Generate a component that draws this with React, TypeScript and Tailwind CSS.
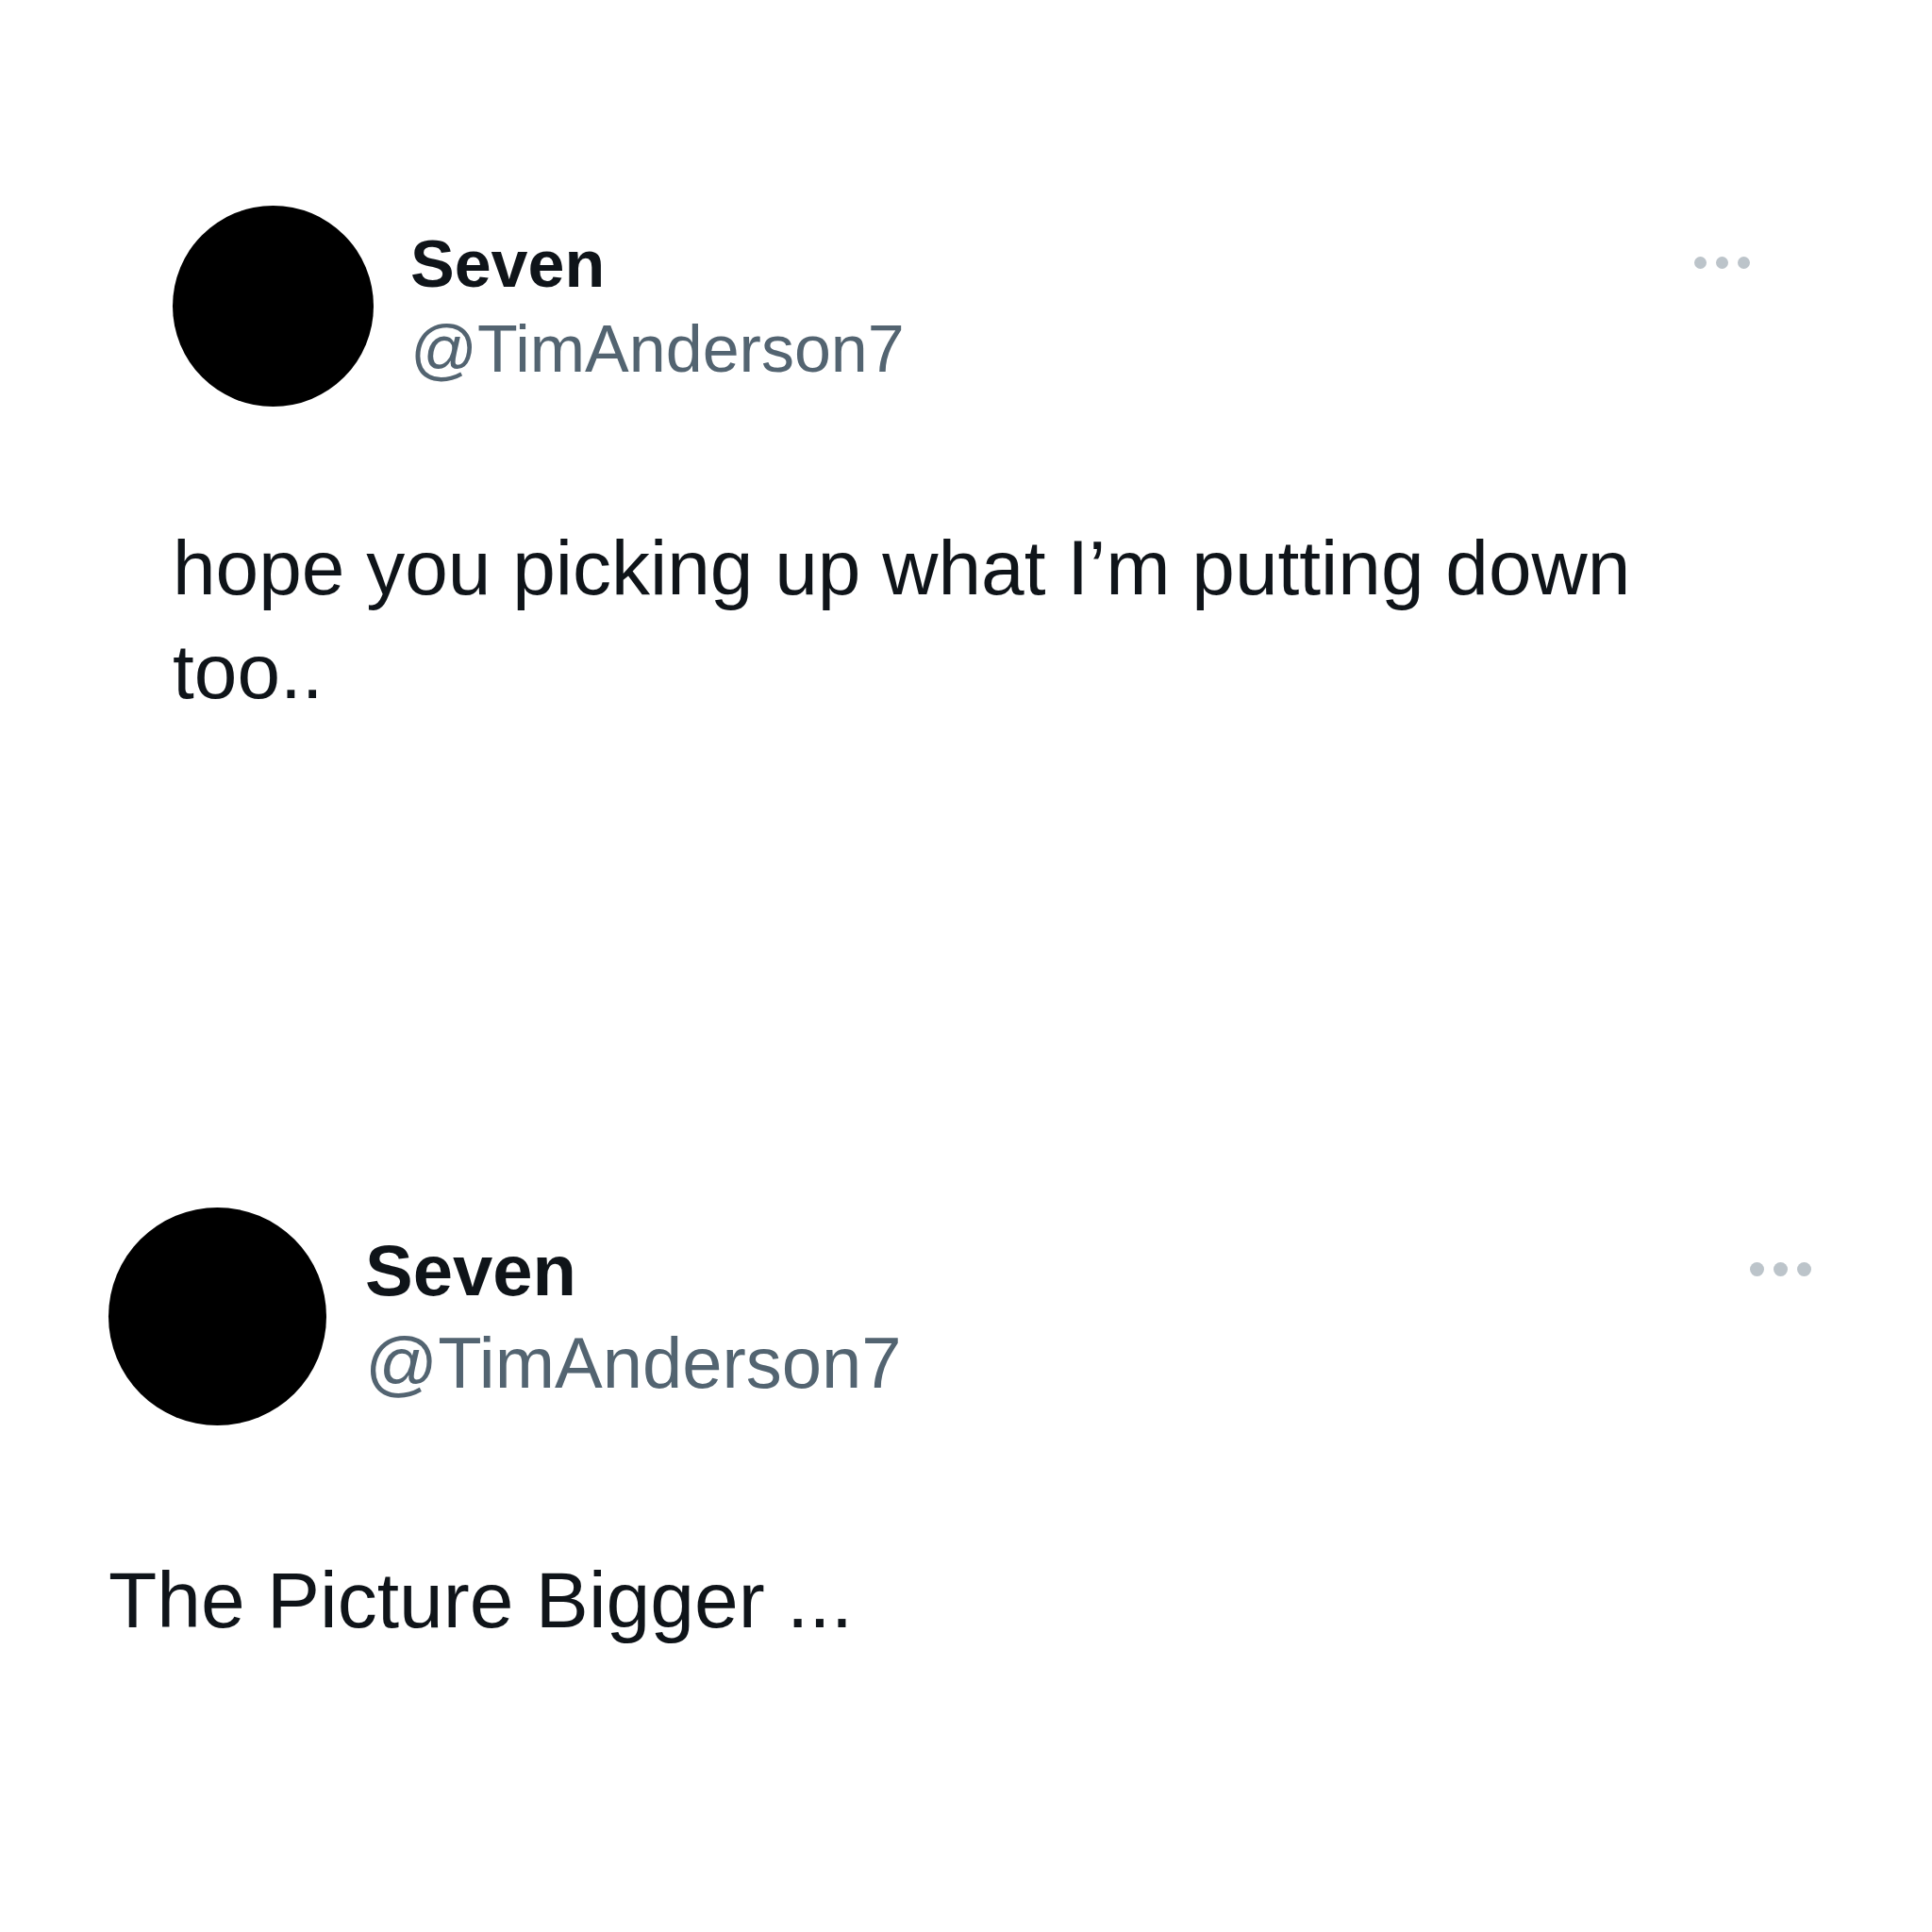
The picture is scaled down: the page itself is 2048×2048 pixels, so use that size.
import React from "react";

function Dots({ dot, gap }: { dot: string; gap: string }) {
  return (
    <div className={`flex ${gap}`}>
      <span className={`${dot} rounded-full bg-[#bcc4ca]`} />
      <span className={`${dot} rounded-full bg-[#bcc4ca]`} />
      <span className={`${dot} rounded-full bg-[#bcc4ca]`} />
    </div>
  );
}

export default function App() {
  return (
    <div
      className="w-[2048px] h-[2048px] bg-white text-[#0f1419] overflow-hidden"
      style={{ fontFamily: '"Liberation Sans", Arial, sans-serif' }}
    >
      {/* first tweet */}
      <div className="ml-[183px] mt-[218px] w-[1672px]">
        <div className="flex items-center">
          <div className="w-[213px] h-[213px] rounded-full bg-black shrink-0" />
          <div className="ml-[39px] flex flex-col">
            <span className="text-[70px] leading-[90px] font-bold">Seven</span>
            <span className="text-[70px] leading-[90px] text-[#536471]">@TimAnderson7</span>
          </div>
          <div className="ml-auto self-start mt-[54px]">
            <Dots dot="w-[13px] h-[13px]" gap="gap-[10px]" />
          </div>
        </div>
        <p className="mt-[116px] text-[82px] leading-[110px] w-[1600px]">
          hope you picking up what I’m putting down too..
        </p>
      </div>

      {/* second tweet */}
      <div className="ml-[115px] mt-[513px] w-[1805px]">
        <div className="flex items-center">
          <div className="w-[231px] h-[231px] rounded-full bg-black shrink-0" />
          <div className="ml-[41px] flex flex-col">
            <span className="text-[76px] leading-[98px] font-bold">Seven</span>
            <span className="text-[76px] leading-[98px] text-[#536471]">@TimAnderson7</span>
          </div>
          <div className="ml-auto self-start mt-[58px]">
            <Dots dot="w-[15px] h-[15px]" gap="gap-[10px]" />
          </div>
        </div>
        <p className="mt-[129px] text-[84px] leading-[112px]">The Picture Bigger ...</p>
      </div>
    </div>
  );
}
